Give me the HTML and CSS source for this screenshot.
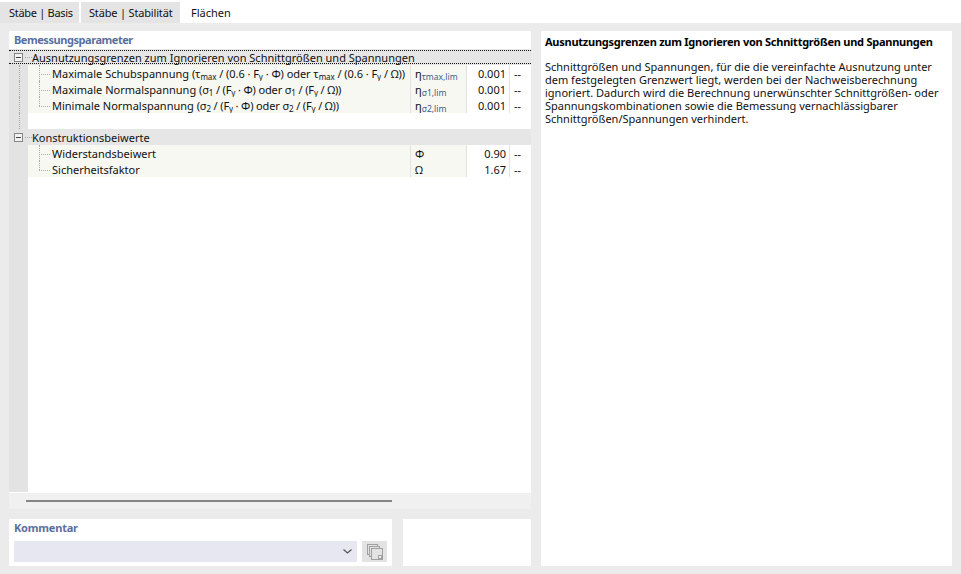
FILE: index.html
```html
<!DOCTYPE html>
<html lang="de">
<head>
<meta charset="utf-8">
<title>Bemessungsparameter</title>
<link rel="stylesheet" href="styles.css">
</head>
<body>
<nav class="tabs">
  <div class="tab">Stäbe | Basis</div>
  <div class="tab">Stäbe | Stabilität</div>
  <div class="tab active">Flächen</div>
</nav>
<main class="content">
  <div class="left">
    <section class="params">
      <h2 class="title">Bemessungsparameter</h2>
      <div class="tree">
        <div class="row group focus"><span class="gutter"><span class="toggle"></span></span><span class="dash"></span><span class="gname">Ausnutzungsgrenzen zum Ignorieren von Schnittgrößen und Spannungen</span></div>
        <div class="row item"><span class="gutter line"></span><span class="branch"></span><span class="name">Maximale Schubspannung <span class="f wide">(τ<sub>max</sub> / (0.6 · F<sub>y</sub> · Φ) oder τ<sub>max</sub> / (0.6 · F<sub>y</sub> / Ω))</span></span><span class="sym">η<sub class="s1">τmax,lim</sub></span><span class="val">0.001</span><span class="unit">--</span></div>
        <div class="row item"><span class="gutter line"></span><span class="branch"></span><span class="name">Maximale Normalspannung <span class="f">(σ<sub>1</sub> / (F<sub>y</sub> · Φ) oder σ<sub>1</sub> / (F<sub>y</sub> / Ω))</span></span><span class="sym">η<sub class="s1">σ1,lim</sub></span><span class="val">0.001</span><span class="unit">--</span></div>
        <div class="row item"><span class="gutter line"></span><span class="branch last"></span><span class="name">Minimale Normalspannung <span class="f">(σ<sub>2</sub> / (F<sub>y</sub> · Φ) oder σ<sub>2</sub> / (F<sub>y</sub> / Ω))</span></span><span class="sym">η<sub class="s1">σ2,lim</sub></span><span class="val">0.001</span><span class="unit">--</span></div>
        <div class="row blank"><span class="gutter line"></span></div>
        <div class="row group"><span class="gutter"><span class="toggle"></span></span><span class="dash"></span><span class="gname">Konstruktionsbeiwerte</span></div>
        <div class="row item"><span class="gutter"></span><span class="branch"></span><span class="name">Widerstandsbeiwert</span><span class="sym">Φ</span><span class="val">0.90</span><span class="unit">--</span></div>
        <div class="row item"><span class="gutter"></span><span class="branch last"></span><span class="name">Sicherheitsfaktor</span><span class="sym">Ω</span><span class="val">1.67</span><span class="unit">--</span></div>
        <div class="filler"><span class="gutter"></span></div>
      </div>
      <div class="scrollbar"><div class="thumb"></div></div>
    </section>
    <div class="bottom">
      <section class="comment">
        <h2 class="title">Kommentar</h2>
        <div class="comment-row">
          <div class="combo">
            <svg class="chev" width="9" height="5" viewBox="0 0 9 5"><path d="M.5.5l4 3.500 4-3.500" fill="none" stroke="#555" stroke-width="1.200"/></svg>
          </div>
          <div class="copy">
            <svg width="16" height="16" viewBox="0 0 16 16" fill="#e3e3e3" stroke="#a0a0a0"><rect x="0.500" y="0.500" width="10" height="10"/><rect x="2.500" y="2.500" width="10" height="10"/><rect x="4.500" y="4.500" width="11" height="11"/><rect x="11" y="11" width="4" height="4" fill="#a0a0a0" stroke="none"/><rect x="12" y="12" width="2" height="2" fill="#eee" stroke="none"/></svg>
          </div>
        </div>
      </section>
      <section class="small"></section>
    </div>
  </div>
  <aside class="help">
    <h3 class="help-title">Ausnutzungsgrenzen zum Ignorieren von Schnittgrößen und Spannungen</h3>
    <p class="help-text">Schnittgrößen und Spannungen, für die die vereinfachte Ausnutzung unter<br>dem festgelegten Grenzwert liegt, werden bei der Nachweisberechnung<br>ignoriert. Dadurch wird die Berechnung unerwünschter Schnittgrößen- oder<br>Spannungskombinationen sowie die Bemessung vernachlässigbarer<br>Schnittgrößen/Spannungen verhindert.</p>
  </aside>
</main>
</body>
</html>
```
FILE: styles.css
```css
* { box-sizing: border-box; }
html, body { margin: 0; padding: 0; }
body {
  width: 961px; height: 574px; overflow: hidden;
  background: #ebebeb; color: #111;
  font: 11px/16px "Noto Sans", "Liberation Sans", sans-serif;
}
.tabs { display: flex; height: 23px; background: #fff; padding-top: 2px; }
.tab { height: 21px; padding: 3px 0 0 9px; background: #e4e4e4; white-space: nowrap; }
.tab:nth-child(1) { width: 79px; margin-right: 2px; letter-spacing: -0.3px; }
.tab:nth-child(2) { width: 99px; padding-left: 8px; letter-spacing: -0.17px; }
.tab.active { width: 63px; background: #fff; padding-left: 11px; }
.content { display: flex; padding: 8px 9px; gap: 10px; height: 551px; }
.left { width: 522px; display: flex; flex-direction: column; gap: 10px; }
.params { height: 478px; background: #fff; display: flex; flex-direction: column; }
.title { margin: 0; padding: 1px 5px 0; height: 18px; font-size: 11px; line-height: 16px; font-weight: 700; color: #5b6f9e; letter-spacing: -0.45px; }
.tree { height: 443px; margin-bottom: 1px; display: flex; flex-direction: column; }
.row { display: flex; height: 16px; flex: none; position: relative; }
.gutter { width: 19px; flex: none; background: #e3e3e3; position: relative; }
.gutter.line::before { content: ""; position: absolute; left: 10px; top: 0; height: 16px; border-left: 1px dotted #a8a8a8; }
.group { background: #e6e6e6; }
.focus::after { content: ""; position: absolute; inset: 1px 0 1px 0; border-top: 1px dotted #111; border-bottom: 1px dotted #111; pointer-events: none; }
.toggle { position: absolute; left: 5px; top: 4px; width: 9px; height: 9px; border: 1px solid #858585; background: #f2f2f2; }
.toggle::after { content: ""; position: absolute; left: 1px; top: 3px; width: 5px; height: 1px; background: #444; }
.dash { width: 7px; height: 9px; margin-left: -3px; border-bottom: 1px dotted #aaa; flex: none; position: relative; }
.gname { white-space: nowrap; padding-top: 1px; }
.item { background: #f7f8f2; }
.branch { width: 24px; flex: none; position: relative; }
.branch::before { content: ""; position: absolute; left: 11px; top: 0; height: 16px; border-left: 1px dotted #aaa; }
.branch.last::before { height: 9px; }
.branch::after { content: ""; position: absolute; left: 11px; top: 9px; width: 11px; border-top: 1px dotted #aaa; }
.name { width: 358px; flex: none; white-space: nowrap; overflow: hidden; padding-top: 1px; }
.f { letter-spacing: -0.15px; }
.f.wide { letter-spacing: -0.06px; }
sub { font-size: 8px; line-height: 0; vertical-align: -2px; }
.sym { width: 57px; flex: none; padding: 1px 0 0 4px; border-left: 1px solid #e2e2e2; border-right: 1px solid #e2e2e2; white-space: nowrap; overflow: hidden; }
.s1 { font-size: 8.500px; color: #3b5f8a; }
.val { width: 43px; flex: none; background: #fff; text-align: right; padding: 1px 3px 0 0; border-right: 1px solid #e2e2e2; }
.unit { flex: 1; background: #fff; padding: 1px 0 0 4px; }
.blank { background: #fff; }
.filler { flex: 1; display: flex; }
.scrollbar { height: 16px; background: #f0f0f0; display: flex; align-items: center; padding-left: 17px; }
.thumb { width: 366px; height: 2px; background: #868686; }
.bottom { display: flex; gap: 11px; height: 47px; }
.comment { width: 383px; background: #fff; }
.comment .title { height: 22px; padding-top: 1px; letter-spacing: -0.2px; }
.comment-row { display: flex; gap: 5px; padding: 0 5px; }
.combo { width: 344px; height: 21px; background: #e7e7f1; display: flex; align-items: center; justify-content: flex-end; padding-right: 5px; }
.copy { width: 25px; height: 21px; background: #e3e3e3; display: flex; align-items: center; justify-content: center; }
.small { width: 128px; background: #fff; }
.help { width: 411px; background: #fff; padding: 3px 4px; }
.help-title { margin: 0 0 10px; font-size: 11px; line-height: 16px; font-weight: 700; color: #000; white-space: nowrap; letter-spacing: -0.25px; }
.help-text { margin: 0; line-height: 13px; white-space: nowrap; }
```
